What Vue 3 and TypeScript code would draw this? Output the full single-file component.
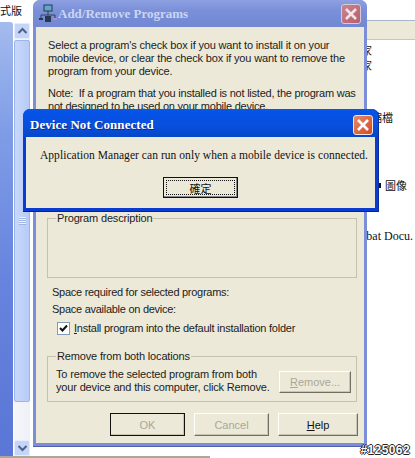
<script setup lang="ts">
const sideLabels = [
  { text: '式版', cls: 'lbl-top' },
  { text: '縮檔', cls: 'lbl-a' },
  { text: '圖像', cls: 'lbl-b' },
  { text: 'Acrobat Docu.', cls: 'lbl-c' },
];
</script>

<template>
  <div class="desktop">
    <div class="left-strip"></div>
    <div class="scrollbar">
      <div class="sb-btn">
        <svg width="11" height="8" viewBox="0 0 11 8"><path d="M1.5 6 L5.5 2 L9.5 6" fill="none" stroke="#4d6185" stroke-width="2" /></svg>
      </div>
      <div class="sb-thumb"><span class="grip"></span></div>
      <div class="sb-track"></div>
      <div class="sb-btn">
        <svg width="11" height="8" viewBox="0 0 11 8"><path d="M1.5 2 L5.5 6 L9.5 2" fill="none" stroke="#4d6185" stroke-width="2" /></svg>
      </div>
    </div>
    <div class="top-band"></div>
    <div class="bottom-line"></div>

    <span v-for="l in sideLabels" :key="l.cls" class="side-label" :class="l.cls">{{ l.text }}</span>
    <span class="side-char c1">家</span>
    <span class="side-char c2">家</span>
    <span class="bullet"></span>

    <!-- inactive window behind -->
    <div class="win back">
      <div class="title back-title">
        <svg class="prog-icon" width="20" height="20" viewBox="0 0 20 20">
          <rect x="6" y="1" width="8" height="6" fill="#5fa8c8" stroke="#28384f" />
          <path d="M10 7v4M3 14v-3h14v3" fill="none" stroke="#30405a" />
          <rect x="1" y="14" width="4" height="2" fill="#28384f" />
          <rect x="7" y="12" width="6" height="6" fill="#28384f" />
          <rect x="15" y="14" width="4" height="2" fill="#b48ac0" />
        </svg>
        <span class="title-text">Add/Remove Programs</span>
        <div class="close dim">
          <svg width="14" height="14" viewBox="0 0 14 14"><path d="M2 2 L12 12 M12 2 L2 12" stroke="#f4e4e8" stroke-width="2.6" /></svg>
        </div>
      </div>
      <div class="back-body">
        <p class="para">Select a program's check box if you want to install it on your<br />mobile device, or clear the check box if you want to remove the<br />program from your device.</p>
        <p class="para note">Note:&nbsp; If a program that you installed is not listed, the program was<br />not designed to be used on your mobile device.</p>

        <fieldset class="group desc">
          <legend>Program description</legend>
        </fieldset>

        <div class="space first">Space required for selected programs:</div>
        <div class="space">Space available on device:</div>
        <label class="check-row">
          <span class="check">
            <svg width="9" height="9" viewBox="0 0 9 9"><path d="M1 4 L3.5 6.5 L8 1.5" fill="none" stroke="#111" stroke-width="2" /></svg>
          </span>
          <span><u>I</u>nstall program into the default installation folder</span>
        </label>

        <fieldset class="group remove">
          <legend>Remove from both locations</legend>
          <div class="remove-row">
            <div class="remove-text">To remove the selected program from both<br />your device and this computer, click Remove.</div>
            <button class="btn disabled remove-btn"><u>R</u>emove...</button>
          </div>
        </fieldset>

        <div class="actions">
          <button class="btn disabled default-btn">OK</button>
          <button class="btn disabled">Cancel</button>
          <button class="btn help-btn"><u>H</u>elp</button>
        </div>
      </div>
    </div>

    <!-- active message box -->
    <div class="win front">
      <div class="title front-title">
        <span class="title-text">Device Not Connected</span>
        <div class="close hot">
          <svg width="14" height="14" viewBox="0 0 14 14"><path d="M2 2 L12 12 M12 2 L2 12" stroke="#fff" stroke-width="2.6" /></svg>
        </div>
      </div>
      <div class="front-body">
        <p class="msg">Application Manager can run only when a mobile device is connected.</p>
        <button class="ok-btn"><span class="ok-inner">確定</span></button>
      </div>
    </div>

    <span class="stamp">#125062</span>
  </div>
</template>

<style>
html, body { margin: 0; background: #fff; }
</style>

<style scoped>
.desktop {
  position: relative;
  width: 415px;
  height: 458px;
  overflow: hidden;
  background: #fff;
  font-family: "Liberation Sans", Arial, sans-serif;
}
.left-strip {
  position: absolute;
  left: 0;
  top: 22px;
  width: 13px;
  height: 436px;
  border-top-right-radius: 3px;
  background: linear-gradient(180deg, #a4bbee 0%, #7f9de6 25%, #6683de 60%, #5a76d6 100%);
}
.scrollbar {
  position: absolute;
  left: 14px;
  top: 23px;
  width: 16px;
  height: 433px;
  display: flex;
  flex-direction: column;
  background: linear-gradient(90deg, #f6f6f8, #eef1f8);
}
.sb-btn {
  height: 16px;
  flex: none;
  display: flex;
  align-items: center;
  justify-content: center;
  background: #c5d5f8;
  border: 1px solid #e6eefc;
  box-sizing: border-box;
  border-radius: 2px;
}
.sb-thumb {
  height: 362px;
  flex: none;
  margin-top: 1px;
  display: flex;
  align-items: center;
  justify-content: center;
  background: linear-gradient(90deg, #c8d8fb, #b7cbf7);
  border: 1px solid #9db4e6;
  box-sizing: border-box;
  border-radius: 2px;
}
.grip {
  width: 7px;
  height: 8px;
  background: repeating-linear-gradient(180deg, #eef3fd 0 1px, #9fb4e2 1px 2px);
}
.sb-track { flex: 1; }
.top-band {
  position: absolute;
  left: 360px;
  top: 20px;
  width: 55px;
  height: 20px;
  box-sizing: border-box;
  background: #ece9d8;
  border-top: 1px solid #a9b4c8;
  border-bottom: 1px solid #c8c5b2;
}
.bottom-line {
  position: absolute;
  left: 0;
  top: 456px;
  width: 210px;
  height: 2px;
  background: #aca899;
}
.side-label {
  position: absolute;
  font-size: 11px;
  line-height: 14px;
  color: #111;
  white-space: nowrap;
  font-family: "Noto Sans CJK TC", "Liberation Serif", serif;
}
.lbl-top { left: 0; top: 3px; }
.lbl-a { left: 371px; top: 110px; }
.lbl-b { left: 385px; top: 178px; }
.lbl-c { right: 2px; top: 229px; font-family: "Liberation Serif", serif; font-size: 12px; }
.side-char {
  position: absolute;
  left: 361px;
  font-size: 11px;
  line-height: 14px;
  color: #222;
  font-family: "Noto Sans CJK TC", sans-serif;
}
.c1 { top: 43px; }
.c2 { top: 58px; }
.bullet {
  position: absolute;
  left: 378px;
  top: 183px;
  width: 3px;
  height: 5px;
  background: #111;
}
.win {
  position: absolute;
  box-sizing: border-box;
  display: flex;
  flex-direction: column;
  border-radius: 7px 7px 0 0;
}
.back {
  left: 33px;
  top: 0;
  width: 334px;
  height: 447px;
  background: #7b8fd8;
  padding: 0 3px 3px;
  border-bottom: 1px solid #5560ac;
}
.front {
  left: 23px;
  top: 109px;
  width: 356px;
  height: 103px;
  background: #0a3ccf;
  padding: 0 3px 3px;
  border-right: 1px solid #0a2f9e;
  border-bottom: 1px solid #04248c;
}
.title {
  display: flex;
  align-items: center;
  flex: none;
  font-family: "Liberation Serif", serif;
  font-weight: 700;
  box-sizing: border-box;
}
.back-title {
  height: 27px;
  background: linear-gradient(180deg, #8da0e2 0%, #7a8fd8 40%, #7388d4 100%);
  border-radius: 7px 7px 0 0;
  margin: 0 -3px;
  padding: 0 6px 0 5px;
}
.prog-icon { flex: none; margin-right: 0; }
.back-title .title-text {
  flex: 1;
  font-size: 13px;
  color: #c9d6f2;
}
.front-title {
  height: 28px;
  margin: 0 -3px;
  padding: 4px 5px 0 7px;
  border-radius: 7px 7px 0 0;
  background: linear-gradient(180deg, #0a58e0 0%, #0453e6 12%, #0a4fdc 60%, #0447c8 100%);
}
.front-title .title-text {
  flex: 1;
  font-size: 13px;
  letter-spacing: 0.05px;
  color: #fff;
  text-shadow: 1px 1px 0 #0a2a90;
}
.close {
  width: 20px;
  height: 20px;
  border-radius: 3px;
  border: 1px solid #f2e6ea;
  box-sizing: border-box;
  display: flex;
  align-items: center;
  justify-content: center;
  flex: none;
}
.dim { background: linear-gradient(135deg, #c9858f, #b55f6e); border-color: #d8c8d8; }
.hot { background: linear-gradient(135deg, #e58a6a, #d64a22); border-color: #f4e6e0; }
.back-body {
  flex: 1;
  background: #ece9d8;
  padding: 12px 6px 0 11px;
  color: #1c1c1c;
  font-size: 11px;
  letter-spacing: -0.16px;
  line-height: 13px;
  min-height: 0;
}
.para { margin: 0 0 0 1px; white-space: nowrap; }
.note { margin-top: 9px; letter-spacing: -0.23px; }
.group {
  margin: 0;
  padding: 0;
  border: 1px solid #c4c1ac;
  min-width: 0;
  box-sizing: border-box;
}
.group legend {
  margin-left: 8px;
  padding: 0 1px;
  font-size: 11px;
  line-height: 13px;
}
.desc {
  margin: 99px 1px 0 0;
  height: 66px;
}
.space { margin-left: 5px; margin-top: 4px; letter-spacing: -0.27px; }
.space.first { margin-top: 8px; }
.check-row {
  display: flex;
  align-items: center;
  margin: 6px 0 0 10px;
  gap: 4px;
  letter-spacing: -0.24px;
}
.check {
  width: 11px;
  height: 11px;
  border: 1px solid #7f9db9;
  background: #fff;
  display: flex;
  align-items: center;
  justify-content: center;
  box-sizing: content-box;
}
.remove {
  margin: 15px 1px 0 0;
  height: 52px;
}
.remove-row {
  display: flex;
  align-items: flex-start;
  justify-content: space-between;
  padding: 5px 5px 0 8px;
}
.remove-text { white-space: nowrap; }
.btn {
  width: 75px;
  height: 23px;
  padding: 0;
  flex: none;
  box-sizing: border-box;
  background: #ece9d8;
  border: 1px solid;
  border-color: #fff #716f64 #716f64 #fff;
  box-shadow: inset -1px -1px 0 #c8c5b2;
  font-family: "Liberation Sans", Arial, sans-serif;
  font-size: 11px;
  color: #111;
}
.btn.disabled { color: #a9a797; }
.remove-btn { width: 72px; height: 22px; margin-top: 3px; }
.default-btn { border: 1px solid #111; }
.help-btn { width: 80px; }
.actions {
  display: flex;
  justify-content: flex-end;
  gap: 9px;
  margin-top: 11px;
}
.front-body {
  flex: 1;
  background: #ece9d8;
  display: flex;
  flex-direction: column;
  align-items: center;
  min-height: 0;
}
.msg {
  margin: 10px 0 0 7px;
  font-family: "Liberation Serif", serif;
  font-size: 11.5px;
  line-height: 16px;
  letter-spacing: 0.05px;
  color: #111;
  white-space: nowrap;
}
.ok-btn {
  margin-top: 14px;
  width: 75px;
  height: 21px;
  padding: 2px;
  flex: none;
  box-sizing: border-box;
  background: #ece9d8;
  border: 1px solid #111;
  box-shadow: inset -1px -1px 0 #888;
  font-family: "Noto Sans CJK TC", sans-serif;
  font-size: 11px;
  color: #111;
}
.ok-inner {
  display: flex;
  align-items: center;
  justify-content: center;
  height: 100%;
  border: 1px dotted #111;
  box-sizing: border-box;
}
.stamp {
  position: absolute;
  right: 5px;
  top: 443px;
  font-family: "Liberation Sans", Arial, sans-serif;
  font-size: 12px;
  font-weight: 700;
  letter-spacing: 0.4px;
  line-height: 14px;
  color: #fff;
  text-shadow: 1px 0 0 #222, -1px 0 0 #222, 0 1px 0 #222, 0 -1px 0 #222;
}
</style>
